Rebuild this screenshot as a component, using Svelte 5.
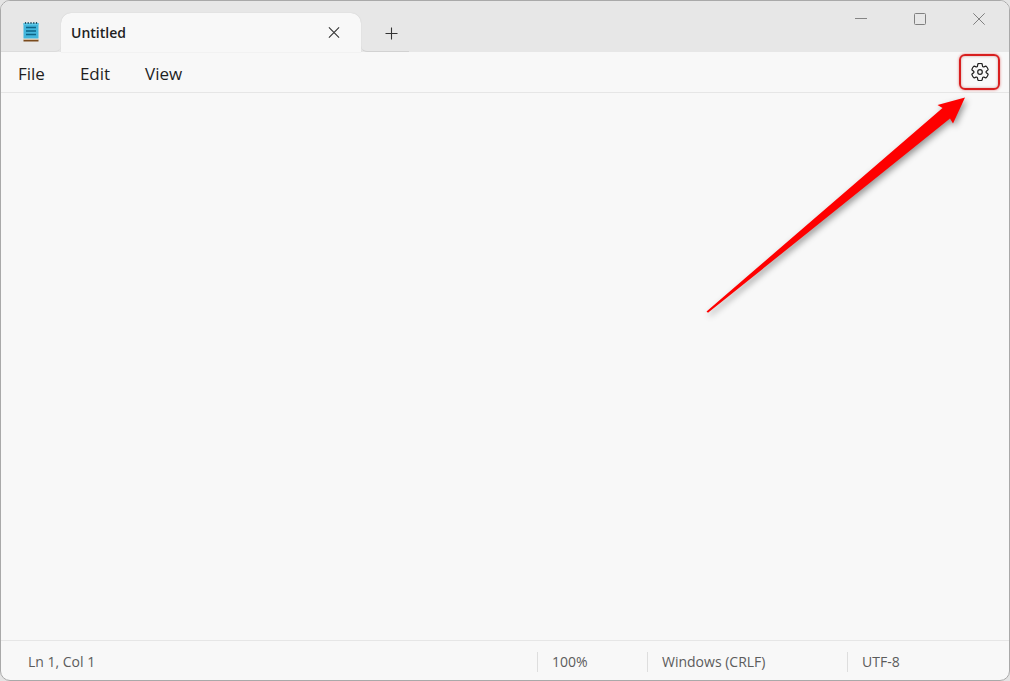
<script>
  const menus = ['File', 'Edit', 'View'];
  let text = $state('');
</script>

<div class="window">
  <header class="titlebar">
    <div class="app-icon">
      <svg width="16" height="21" viewBox="0 0 16 21" aria-hidden="true">
        <rect x="0.5" y="18.5" width="15" height="2" fill="#7a4a1c" />
        <rect x="0.5" y="17.5" width="15" height="1" fill="#f3e3c8" />
        <rect x="0.5" y="2" width="15" height="15.5" fill="#43b6dc" />
        <rect x="0.5" y="2" width="15" height="2" fill="#5cc6e6" />
        <path d="M2.5 1v2M5.2 1v2M8 1v2M10.8 1v2M13.5 1v2" stroke="#26566b" stroke-width="1.2" />
        <path d="M3 6.5h10M3 10h10M3 13.5h10" stroke="#0d6486" stroke-width="1.5" />
      </svg>
    </div>
    <div class="tab">
      <span class="tab-title">Untitled</span>
      <button class="icon-button" aria-label="Close tab">
        <svg width="12" height="12" viewBox="0 0 12 12"><path d="M0.9 0.4l10.2 10.2M11.1 0.4L0.9 10.6" stroke="#333" stroke-width="1.1" /></svg>
      </button>
    </div>
    <div class="new-tab">
      <button class="icon-button" aria-label="New tab">
        <svg width="13" height="13" viewBox="0 0 13 13"><path d="M6.5 0.5v12M0.5 6.5h12" stroke="#333" stroke-width="1.1" /></svg>
      </button>
    </div>
    <div class="caption">
      <button aria-label="Minimize"><svg width="12" height="12" viewBox="0 0 12 12"><path d="M0 5.5h12" stroke="#858585" /></svg></button>
      <button aria-label="Maximize"><svg width="12" height="12" viewBox="0 0 12 12"><rect x="0.5" y="0.5" width="11" height="11" rx="1" fill="none" stroke="#808080" /></svg></button>
      <button aria-label="Close"><svg width="12" height="12" viewBox="0 0 12 12"><path d="M0.3 0.3l11.4 11.4M11.7 0.3L0.3 11.7" stroke="#808080" /></svg></button>
    </div>
  </header>

  <nav class="menubar">
    {#each menus as menu}
      <button class="menu">{menu}</button>
    {/each}
    <button class="settings" aria-label="Settings">
      <svg width="20" height="20" viewBox="0 0 20 20" fill="none" stroke="#222" stroke-width="1.2">
        <path d="M1.91 7.38A8.5 8.5 0 0 1 3.69 4.3a.5.5 0 0 1 .54-.13l1.92.68a1 1 0 0 0 1.32-.76l.36-2a.5.5 0 0 1 .4-.4 8.53 8.53 0 0 1 3.55 0c.2.04.35.2.38.4l.37 2a1 1 0 0 0 1.32.76l1.92-.68a.5.5 0 0 1 .54.13 8.5 8.5 0 0 1 1.78 3.08c.06.2 0 .4-.15.54l-1.56 1.32a1 1 0 0 0 0 1.52l1.56 1.32a.5.5 0 0 1 .15.54 8.5 8.5 0 0 1-1.78 3.08.5.5 0 0 1-.54.13l-1.92-.68a1 1 0 0 0-1.32.76l-.37 2a.5.5 0 0 1-.38.4 8.53 8.53 0 0 1-3.56 0 .5.5 0 0 1-.39-.4l-.36-2a1 1 0 0 0-1.32-.76l-1.92.68a.5.5 0 0 1-.54-.13 8.5 8.5 0 0 1-1.78-3.08.5.5 0 0 1 .15-.54l1.56-1.32a1 1 0 0 0 0-1.52L2.06 7.92a.5.5 0 0 1-.15-.54Z" />
        <circle cx="10" cy="10" r="2.3" />
      </svg>
    </button>
  </nav>

  <textarea aria-label="Text editor" spellcheck="false" bind:value={text}></textarea>

  <footer class="status">
    <span class="position">Ln 1, Col 1</span>
    <span class="cell zoom">100%</span>
    <span class="cell ending">Windows (CRLF)</span>
    <span class="cell encoding">UTF-8</span>
  </footer>

  <svg class="arrow" width="280" height="240" viewBox="0 0 280 240" aria-hidden="true">
    <path d="M16.5 221.5L252.5 18L247.5 15L275 7.5L263 33.5L260 28.5L18 222.8Z" fill="#fe0000" />
  </svg>
</div>

<style>
  :global(body) {
    margin: 0;
    background: #e4e4e4;
  }

  .window {
    position: relative;
    box-sizing: border-box;
    height: 100vh;
    display: flex;
    flex-direction: column;
    overflow: hidden;
    border: 1px solid #a9a9a9;
    border-radius: 10px;
    background: #f8f8f8;
    font-family: "Open Sans", "Noto Sans", sans-serif;
    color: #1f1f1f;
  }

  button {
    display: flex;
    align-items: center;
    justify-content: center;
    padding: 0;
    border: 0;
    background: none;
    font: inherit;
    color: inherit;
  }

  svg {
    display: block;
  }

  .titlebar {
    display: flex;
    height: 51px;
    flex: none;
    background: #e7e7e7;
  }

  .app-icon {
    box-sizing: border-box;
    width: 60px;
    padding: 20px 0 0 22px;
    border-bottom: 1px solid #dcdcdc;
    border-bottom-right-radius: 6px;
  }

  .tab {
    box-sizing: border-box;
    display: flex;
    align-items: center;
    justify-content: space-between;
    width: 300px;
    margin-top: 12px;
    padding: 0 15px 0 10px;
    border-radius: 10px 10px 0 0;
    background: #f8f8f8;
    box-shadow: 0 0 1px #bdbdbd;
  }

  .tab-title {
    font-size: 14px;
    font-weight: 600;
    line-height: 20px;
  }

  .icon-button {
    width: 24px;
    height: 24px;
  }

  .new-tab {
    box-sizing: border-box;
    width: 48px;
    padding: 20px 0 0 18px;
    border-bottom: 1px solid #d2d2d2;
    border-bottom-left-radius: 6px;
  }

  .caption {
    display: flex;
    margin-left: auto;
    padding-right: 1px;
  }

  .caption button {
    width: 59px;
    height: 36px;
  }

  .menubar {
    display: flex;
    align-items: center;
    height: 40px;
    flex: none;
    padding: 0 9px 0 17px;
    border-bottom: 1px solid #e6e6e6;
    gap: 35px;
  }

  .menu {
    padding-top: 4px;
    font-size: 17px;
    line-height: 24px;
  }

  .settings {
    box-sizing: border-box;
    width: 41px;
    height: 36px;
    margin-left: auto;
    border: 2px solid #d81e1e;
    border-radius: 6px;
    box-shadow: 0 0 3px #e08080, inset 0 0 3px #d0a0a0;
  }

  textarea {
    flex: 1;
    min-height: 0;
    padding: 8px 17px;
    border: 0;
    outline: 0;
    resize: none;
    background: transparent;
    font: inherit;
  }

  .status {
    box-sizing: border-box;
    display: flex;
    align-items: center;
    height: 40px;
    flex: none;
    padding: 2px 0 0 27px;
    border-top: 1px solid #e6e6e6;
    font-size: 14px;
    line-height: 20px;
    color: #5c5c5c;
  }

  .position {
    flex: 1;
  }

  .cell {
    box-sizing: border-box;
    padding-left: 14px;
    border-left: 1px solid #dedede;
  }

  .zoom {
    width: 110px;
  }

  .ending {
    width: 200px;
  }

  .encoding {
    width: 162px;
  }

  .arrow {
    position: absolute;
    top: 89px;
    right: 39px;
    pointer-events: none;
    filter: drop-shadow(2px 3px 3px rgba(0, 0, 0, 0.4));
  }
</style>
